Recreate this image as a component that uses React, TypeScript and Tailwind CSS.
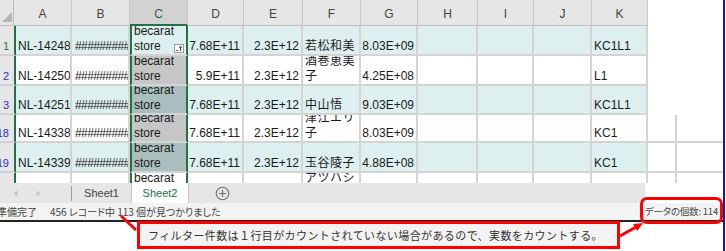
import React from "react";

type Col = { key: string; w: string; align: "l" | "r"; wrap?: boolean };

const cols: Col[] = [
  { key: "A", w: "w-[58px]", align: "l" },
  { key: "B", w: "w-[58px]", align: "l" },
  { key: "C", w: "w-[58px]", align: "l", wrap: true },
  { key: "D", w: "w-[56px]", align: "r" },
  { key: "E", w: "w-[59px]", align: "r" },
  { key: "F", w: "w-[58px]", align: "l", wrap: true },
  { key: "G", w: "w-[57px]", align: "r" },
  { key: "H", w: "w-[60px]", align: "l" },
  { key: "I", w: "w-[56px]", align: "l" },
  { key: "J", w: "w-[58px]", align: "l" },
  { key: "K", w: "w-[56px]", align: "l" },
];

type Row = {
  n: string;
  h: string;
  teal: boolean;
  active?: boolean;
  sel?: boolean;
  grid?: boolean;
  cells: string[];
};

const rows: Row[] = [
  { n: "1", h: "h-[30px]", teal: true, active: true, cells: ["NL-14248", "#########", "becarat store", "7.68E+11", "2.3E+12", "若松和美", "8.03E+09", "", "", "", "KC1L1"] },
  { n: "2", h: "h-[30px]", teal: false, sel: true, cells: ["NL-14250", "#########", "becarat store", "5.9E+11", "2.3E+12", "酒巻恵美子", "4.25E+08", "", "", "", "L1"] },
  { n: "3", h: "h-[29px]", teal: true, sel: true, cells: ["NL-14251", "#########", "becarat store", "7.68E+11", "2.3E+12", "中山悟", "9.03E+09", "", "", "", "KC1L1"] },
  { n: "18", h: "h-[28px]", teal: false, sel: true, grid: true, cells: ["NL-14338", "#########", "becarat store", "7.68E+11", "2.3E+12", "津江エリ子", "8.03E+09", "", "", "", "KC1"] },
  { n: "19", h: "h-[30px]", teal: true, sel: true, grid: true, cells: ["NL-14339", "#########", "becarat store", "7.68E+11", "2.3E+12", "玉谷陵子", "4.88E+08", "", "", "", "KC1"] },
  { n: "20", h: "h-[30px]", teal: false, grid: true, cells: ["NL-14340", "#########", "becarat store", "7.68E+11", "2.3E+12", "アツハシ ミカ", "8.03E+09", "", "", "", "KC1"] },
];

function FilterButton() {
  return (
    <div className="absolute right-[2px] bottom-[1px] w-[10px] h-[9px] bg-white border border-[#9a9a9a]">
      <svg width="8" height="7" viewBox="0 0 8 7" className="block">
        <rect x="1" y="5" width="2" height="1" fill="#6b6b6b" />
        <path d="M3.5 1.5 H7.5 L6 3.5 V6 H5 V3.5 Z" fill="#4a4a4a" />
      </svg>
    </div>
  );
}

function cellClass(row: Row, ci: number, col: Col) {
  let c = "relative flex items-end overflow-hidden border-b-2 border-r-2 border-[#d4d4d4] px-[2px] leading-[15px] " + col.w;
  c += col.align === "r" ? " justify-end" : " justify-start";
  if (ci === 2) {
    c += " border-l-2 border-l-[#217346] border-r-[#217346]";
    if (row.active) c += " bg-[#ddf0ef]";
    else if (!row.sel) c += " bg-white";
    else c += row.teal ? " bg-[#aabfbd]" : " bg-[#c6c6c6]";
  } else {
    c += row.teal ? " bg-[#ddf0ef]" : " bg-white";
  }
  return c;
}

export default function App() {
  return (
    <div className="relative w-[726px] h-[251px] overflow-hidden bg-white flex font-['Liberation_Sans','Noto_Sans_CJK_JP',sans-serif] text-[12px] text-[#1a1a1a]">
      <div className="w-[723px] flex flex-col">
        {/* sheet grid */}
        <div className="h-[183px] overflow-hidden flex flex-col">
          <div className="h-[26px] flex shrink-0">
            <div className="relative w-[14px] bg-[#e6e6e6] border-r border-b border-[#bdbdbd]">
              <svg width="12" height="12" viewBox="0 0 12 12" className="absolute right-0 bottom-[2px]">
                <path d="M11 1 V11 H1 Z" fill="#b4b4b4" />
              </svg>
            </div>
            {cols.map((col) => (
              <div
                key={col.key}
                className={
                  col.key === "C"
                    ? "flex items-center justify-center pt-[3px] bg-[#d2d2d2] text-[#1e6b40] border-r border-[#c8c8c8] border-b-2 border-b-[#217346] " + col.w
                    : "flex items-center justify-center pt-[3px] bg-[#e6e6e6] text-[#444] border-r border-[#c8c8c8] border-b border-b-[#bdbdbd] " + col.w
                }
              >
                {col.key}
              </div>
            ))}
            <div className="flex-1 bg-white" />
          </div>

          {rows.map((row) => (
            <div key={row.n} className={"flex shrink-0 " + row.h}>
              <div
                className={
                  "w-[16px] flex items-end justify-end pr-[5px] leading-[15px] text-[11px] bg-[#e6e6e6] border-r-2 border-r-[#217346] border-b-2 border-b-[#d0d0d0] " +
                  (row.active ? "text-[#217346]" : "text-[#2b2bd8]")
                }
              >
                {row.n}
              </div>
              {cols.map((col, ci) => {
                const v = row.cells[ci];
                const isB = ci === 1;
                return (
                  <div
                    key={col.key}
                    className={ci === 0 ? cellClass(row, ci, { ...col, w: "w-[56px]" }) : cellClass(row, ci, col)}
                  >
                    <span
                      className={
                        col.wrap
                          ? ci === 5
                            ? "whitespace-normal break-all tracking-[0.5px] pr-[2px]"
                            : "whitespace-normal pr-[2px]"
                          : isB
                          ? "whitespace-nowrap tracking-[-0.6px] pl-[1px]"
                          : "whitespace-nowrap"
                      }
                    >
                      {v}
                    </span>
                    {ci === 2 && row.active && <FilterButton />}
                  </div>
                );
              })}
              {row.grid ? (
                <>
                  <div className="w-[29px] border-r-2 border-b-2 border-[#d4d4d4]" />
                  <div className="flex-1 border-b-2 border-[#d4d4d4]" />
                </>
              ) : (
                <div className="flex-1 bg-white" />
              )}
            </div>
          ))}
        </div>

        {/* sheet tabs */}
        <div className="h-[20px] flex shrink-0">
          <div className="w-[645px] bg-[#e6e6e6] flex items-stretch text-[11px]">
            <div className="w-[72px] flex items-center">
              <svg width="5" height="7" viewBox="0 0 5 7" className="ml-[13px]">
                <path d="M4.5 0.5 V6.5 L0.5 3.5 Z" fill="#c2c2c2" />
              </svg>
              <svg width="5" height="7" viewBox="0 0 5 7" className="ml-[18px]">
                <path d="M0.5 0.5 V6.5 L4.5 3.5 Z" fill="#c2c2c2" />
              </svg>
              <div className="ml-auto w-px h-[15px] bg-[#9e9e9e]" />
            </div>
            <div className="w-[59px] flex items-center justify-center text-[#444]">Sheet1</div>
            <div className="w-[58px] flex items-center justify-center bg-white border-x border-[#c6c6c6] text-[#217346]">
              Sheet2
            </div>
            <div className="flex items-center ml-[26px]">
              <svg width="15" height="15" viewBox="0 0 15 15">
                <circle cx="7.5" cy="7.5" r="6.3" fill="none" stroke="#6f6f6f" strokeWidth="1.1" />
                <path d="M7.5 4 V11 M4 7.5 H11" stroke="#6f6f6f" strokeWidth="1.2" />
              </svg>
            </div>
          </div>
          <div className="flex-1 bg-white" />
        </div>

        {/* status bar */}
        <div className="h-[17px] shrink-0 bg-[#f3f3f3] flex items-center text-[10px] text-[#444] font-['Noto_Sans_CJK_JP',sans-serif] [font-feature-settings:'palt'] whitespace-nowrap">
          <span className="ml-[-3px]">準備完了</span>
          <span className="ml-[13px]">456 レコード中 113 個が見つかりました</span>
          <span className="ml-auto mr-[5px] text-[9.5px] tracking-[-0.2px]">データの個数: 114</span>
        </div>
        <div className="h-[2px] shrink-0 bg-[#222]" />
        <div className="flex-1 bg-white" />
      </div>
      <div className="w-[2px] bg-[#1717b5]" />
      <div className="flex-1 bg-white" />

      {/* annotations */}
      <div className="absolute left-[137px] top-[221px] w-[483px] h-[28px] border-[3px] border-[#ff0000] bg-[#f3f3f3] flex items-center pl-[8px] text-[11px] tracking-[0.4px] text-[#333] font-['Noto_Sans_CJK_JP',sans-serif] whitespace-nowrap">
        フィルター件数は１行目がカウントされていない場合があるので、実数をカウントする。
      </div>
      <div className="absolute left-[640px] top-[197px] w-[83px] h-[27px] border-[3px] border-[#ff0000] rounded-[7px]" />
      <svg className="absolute left-0 top-0 pointer-events-none" width="726" height="251" viewBox="0 0 726 251">
        <line x1="121" y1="216" x2="136" y2="230" stroke="#ff0000" strokeWidth="3" />
        <line x1="620" y1="236" x2="636" y2="227" stroke="#ff0000" strokeWidth="3" />
        <polygon points="643,223 637.2,230.9 633.2,223.9" fill="#ff0000" />
      </svg>
    </div>
  );
}
